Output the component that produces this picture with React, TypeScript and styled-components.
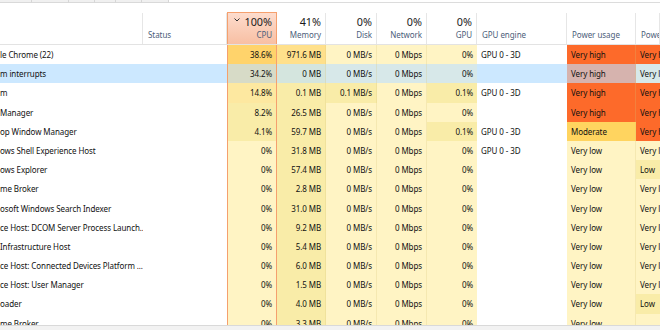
import React from "react";
import styled, { createGlobalStyle } from "styled-components";

const GlobalStyle = createGlobalStyle`
  html, body { margin: 0; padding: 0; background: #fff; }
  body {
    font-family: "Segoe UI", "Noto Sans", "Liberation Sans", sans-serif;
    overflow: hidden;
  }
`;

const COLS = "143px 84px 50px 49px 51px 50px 50px 90px 69px 1fr";
const CPU_LINE = "#f5a06e";

type Heat = "none" | "h0" | "h1" | "h2" | "h3" | "mem" | "mod" | "vhigh";

const HEAT: Record<Heat, [number, number, number]> = {
  none: [255, 255, 255],
  h0: [255, 244, 196],
  h1: [249, 236, 168],
  h2: [253, 232, 160],
  mem: [255, 224, 139],
  h3: [255, 211, 107],
  mod: [255, 212, 95],
  vhigh: [253, 106, 42],
};

// selection is a translucent blue laid over the heat colour
const SEL = [190, 224, 255];
const SEL_A = 0.62;

const paint = (heat: Heat, selected?: boolean) => {
  const c = HEAT[heat];
  if (heat === "none" && selected) return "#cce8ff";
  if (!selected) return `rgb(${c[0]}, ${c[1]}, ${c[2]})`;
  const m = c.map((v, i) => Math.round(v * (1 - SEL_A) + SEL[i] * SEL_A));
  return `rgb(${m[0]}, ${m[1]}, ${m[2]})`;
};

type Val = [string, Heat];
type Proc = {
  name: string;
  cpu: Val;
  mem: Val;
  disk: Val;
  net: string;
  gpu: Val;
  engine: string;
  power: Val;
  trend: Val;
  selected?: boolean;
};

const z: Val = ["0%", "h0"];
const dz: Val = ["0 MB/s", "h0"];
const vlow: Val = ["Very low", "h0"];
const vhigh: Val = ["Very high", "vhigh"];

const procs: Proc[] = [
  { name: "le Chrome (22)", cpu: ["38.6%", "h3"], mem: ["971.6 MB", "mem"], disk: dz, net: "0 Mbps", gpu: z, engine: "GPU 0 - 3D", power: vhigh, trend: vhigh },
  { name: "m interrupts", cpu: ["34.2%", "h3"], mem: ["0 MB", "h1"], disk: dz, net: "0 Mbps", gpu: z, engine: "", power: vhigh, trend: vlow, selected: true },
  { name: "m", cpu: ["14.8%", "h2"], mem: ["0.1 MB", "h1"], disk: ["0.1 MB/s", "h1"], net: "0 Mbps", gpu: ["0.1%", "h1"], engine: "GPU 0 - 3D", power: vhigh, trend: vhigh },
  { name: "Manager", cpu: ["8.2%", "h1"], mem: ["26.5 MB", "h1"], disk: dz, net: "0 Mbps", gpu: z, engine: "", power: vhigh, trend: vhigh },
  { name: "op Window Manager", cpu: ["4.1%", "h1"], mem: ["59.7 MB", "h1"], disk: dz, net: "0 Mbps", gpu: ["0.1%", "h1"], engine: "GPU 0 - 3D", power: ["Moderate", "mod"], trend: vhigh },
  { name: "ows Shell Experience Host", cpu: z, mem: ["31.8 MB", "h1"], disk: dz, net: "0 Mbps", gpu: z, engine: "GPU 0 - 3D", power: vlow, trend: vlow },
  { name: "ows Explorer", cpu: z, mem: ["57.4 MB", "h1"], disk: dz, net: "0 Mbps", gpu: z, engine: "", power: vlow, trend: ["Low", "h1"] },
  { name: "me Broker", cpu: z, mem: ["2.8 MB", "h1"], disk: dz, net: "0 Mbps", gpu: z, engine: "", power: vlow, trend: vlow },
  { name: "osoft Windows Search Indexer", cpu: z, mem: ["31.0 MB", "h1"], disk: dz, net: "0 Mbps", gpu: z, engine: "", power: vlow, trend: vlow },
  { name: "ce Host: DCOM Server Process Launch...", cpu: z, mem: ["9.2 MB", "h1"], disk: dz, net: "0 Mbps", gpu: z, engine: "", power: vlow, trend: vlow },
  { name: " Infrastructure Host", cpu: z, mem: ["5.4 MB", "h1"], disk: dz, net: "0 Mbps", gpu: z, engine: "", power: vlow, trend: vlow },
  { name: "ce Host: Connected Devices Platform ...", cpu: z, mem: ["6.0 MB", "h1"], disk: dz, net: "0 Mbps", gpu: z, engine: "", power: vlow, trend: vlow },
  { name: "ce Host: User Manager", cpu: z, mem: ["1.5 MB", "h1"], disk: dz, net: "0 Mbps", gpu: z, engine: "", power: vlow, trend: vlow },
  { name: "oader", cpu: z, mem: ["4.0 MB", "h1"], disk: dz, net: "0 Mbps", gpu: z, engine: "", power: vlow, trend: ["Low", "h1"] },
  { name: "me Broker", cpu: z, mem: ["3.3 MB", "h1"], disk: dz, net: "0 Mbps", gpu: z, engine: "", power: vlow, trend: ["", "h0"] },
];

const headers = [
  { pct: "", label: "", align: "left" },
  { pct: "", label: "Status", align: "left" },
  { pct: "100%", label: "CPU", align: "right", sorted: true },
  { pct: "41%", label: "Memory", align: "right" },
  { pct: "0%", label: "Disk", align: "right" },
  { pct: "0%", label: "Network", align: "right" },
  { pct: "0%", label: "GPU", align: "right" },
  { pct: "", label: "GPU engine", align: "left" },
  { pct: "", label: "Power usage", align: "left" },
  { pct: "", label: "Power usage trend", align: "left" },
];

const tabs = [32, 37, 26, 21, 26, 27];

const Page = styled.div`
  width: 660px;
  height: 330px;
  display: flex;
  flex-direction: column;
  background: #fff;
  overflow: hidden;
`;

const TabStrip = styled.div`
  display: flex;
  height: 3px;
  flex-shrink: 0;
`;

const Tab = styled.div<{ $w: number }>`
  width: ${(p) => p.$w}px;
  box-sizing: border-box;
  background: #f0f0f0;
  border-right: 1px solid #d6d6d6;
  border-bottom: 1px solid #d9d9d9;
`;

const TabFill = styled.div`
  flex: 1;
  border-bottom: 1px solid #dcdcdc;
`;

const HeaderRow = styled.div`
  display: grid;
  grid-template-columns: ${COLS};
  height: 31px;
  margin-top: 10px;
  border-bottom: 1px solid #e3e3e3;
  flex-shrink: 0;
`;

const HeadCell = styled.div<{ $align: string; $sorted?: boolean }>`
  display: flex;
  flex-direction: column;
  align-items: ${(p) => (p.$align === "right" ? "flex-end" : "flex-start")};
  box-sizing: border-box;
  padding: 2px ${(p) => (p.$align === "right" ? "4px" : "0")} 0
    ${(p) => (p.$align === "right" ? "0" : "5px")};
  border-right: 1px solid #e6e6e6;
  white-space: nowrap;
  overflow: hidden;
  ${(p) =>
    p.$sorted &&
    `
    background: linear-gradient(#fddccd, #f8bfa3);
    border: 1px solid ${CPU_LINE};
    border-bottom: none;
    margin-top: -1px;
  `}
`;

const PctLine = styled.div`
  display: flex;
  align-items: flex-start;
  justify-content: space-between;
  align-self: stretch;
  height: 13px;
  line-height: 13px;
  font-size: 10.8px;
  color: #1a1a1a;
  text-align: right;
`;

const Chevron = styled.svg`
  margin: 3px 0 0 6px;
  flex-shrink: 0;
`;

const PctText = styled.span`
  margin-left: auto;
`;

const HeadLabel = styled.div`
  height: 13px;
  line-height: 13px;
  font-size: 8px;
  letter-spacing: -0.05px;
  color: #4c607a;
`;

const Body = styled.div`
  flex: 1;
  overflow: hidden;
`;

const Row = styled.div`
  display: grid;
  grid-template-columns: ${COLS};
  height: 19.2px;
`;

const Cell = styled.div<{ $bg: string; $align?: "left" | "right"; $cpu?: boolean; $sep?: boolean }>`
  box-sizing: border-box;
  background: ${(p) => p.$bg};
  line-height: 19.2px;
  font-size: 8px;
  letter-spacing: -0.09px;
  color: #111;
  white-space: nowrap;
  overflow: hidden;
  text-align: ${(p) => p.$align || "left"};
  padding: ${(p) => (p.$align === "right" ? "0 4px 0 0" : "0 0 0 4px")};
  ${(p) => p.$sep && "border-right: 1px solid rgba(214, 196, 120, 0.25);"}
  ${(p) =>
    p.$cpu &&
    `
    border-left: 1px solid ${CPU_LINE};
    border-right: 1px solid ${CPU_LINE};
  `}
`;

const NameCell = styled(Cell)`
  padding-left: 0;
`;

const SortChevron = () => (
  <Chevron width="6" height="4" viewBox="0 0 6 4">
    <path d="M0.5 0.5 L3 3 L5.5 0.5" fill="none" stroke="#333" strokeWidth="1" />
  </Chevron>
);

const Footer = styled.div`
  height: 4px;
  flex-shrink: 0;
  border-top: 1px solid #d9d9d9;
  background: #f2f2f2;
`;

export default function App() {
  return (
    <>
      <GlobalStyle />
      <Page>
        <TabStrip>
          {tabs.map((w, i) => (
            <Tab key={i} $w={w} />
          ))}
          <TabFill />
        </TabStrip>
        <HeaderRow>
          {headers.map((h, i) => (
            <HeadCell key={i} $align={h.align} $sorted={h.sorted}>
              <PctLine>
                {h.sorted && <SortChevron />}
                <PctText>{h.pct}</PctText>
              </PctLine>
              <HeadLabel>{h.label}</HeadLabel>
            </HeadCell>
          ))}
        </HeaderRow>
        <Body>
          {procs.map((r, i) => {
            const s = r.selected;
            return (
              <Row key={i}>
                <NameCell $bg={paint("none", s)}>{r.name}</NameCell>
                <Cell $bg={paint("none", s)} />
                <Cell $bg={paint(r.cpu[1], s)} $align="right" $cpu>
                  {r.cpu[0]}
                </Cell>
                <Cell $bg={paint(r.mem[1], s)} $align="right" $sep>
                  {r.mem[0]}
                </Cell>
                <Cell $bg={paint(r.disk[1], s)} $align="right" $sep>
                  {r.disk[0]}
                </Cell>
                <Cell $bg={paint("h0", s)} $align="right" $sep>
                  {r.net}
                </Cell>
                <Cell $bg={paint(r.gpu[1], s)} $align="right">
                  {r.gpu[0]}
                </Cell>
                <Cell $bg={paint("none", s)}>{r.engine}</Cell>
                <Cell $bg={paint(r.power[1], s)} $sep>
                  {r.power[0]}
                </Cell>
                <Cell $bg={paint(r.trend[1], s)}>{r.trend[0]}</Cell>
              </Row>
            );
          })}
        </Body>
        <Footer />
      </Page>
    </>
  );
}
